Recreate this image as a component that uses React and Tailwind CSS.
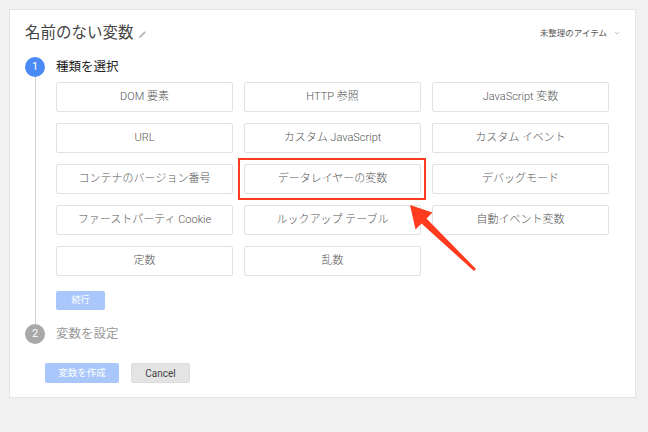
import { ChevronDown } from "lucide-react";

const types = [
  "DOM 要素",
  "HTTP 参照",
  "JavaScript 変数",
  "URL",
  "カスタム JavaScript",
  "カスタム イベント",
  "コンテナのバージョン番号",
  "データレイヤーの変数",
  "デバッグモード",
  "ファーストパーティ Cookie",
  "ルックアップ テーブル",
  "自動イベント変数",
  "定数",
  "乱数",
];

const PencilIcon = () => (
  <svg width="9" height="9" viewBox="0 0 9 9" className="mt-[3px]">
    <path d="M1 8 L1.6 6.2 L6.6 1.2 L7.8 2.4 L2.8 7.4 Z" fill="#b5b5b5" />
  </svg>
);

export default function App() {
  return (
    <div
      className="relative min-h-[432px] w-full bg-[#f1f1f1] pt-[9px] pl-[9px]"
      style={{ fontFamily: '"Roboto", "Noto Sans CJK JP", sans-serif' }}
    >
      <div className="w-[627px] h-[389px] bg-white border border-[#e4e4e4]">
        {/* header */}
        <div className="flex items-start justify-between pl-[15px] pr-[14px] pt-[11px]">
          <div className="flex items-center gap-[4px]">
            <h1 className="text-[15.5px] leading-[24px] text-[#444]">名前のない変数</h1>
            <PencilIcon />
          </div>
          <button className="mt-[5px] flex items-center gap-[6px] text-[8.5px] leading-[14px] text-[#555]">
            未整理のアイテム
            <ChevronDown size={8} strokeWidth={1.5} className="text-[#888]" />
          </button>
        </div>

        {/* step 1 */}
        <div className="mt-[12px] flex pl-[15px]">
          <div className="flex w-[20px] flex-col items-center">
            <div className="flex h-[20px] w-[20px] items-center justify-center rounded-full bg-[#4a8af4] text-[11px] text-white">
              1
            </div>
            <div className="w-px flex-1 bg-[#d0d0d0]" />
          </div>
          <div className="ml-[11px] pb-[14px]">
            <div className="h-[20px] text-[12.5px] leading-[20px] text-[#222]">種類を選択</div>
            <div className="mt-[5px] grid grid-cols-[repeat(3,177px)] gap-[11px]">
              {types.map((t) => (
                <div key={t} className="relative">
                  <button className="flex h-[30px] w-full items-center justify-center rounded-[2px] border border-[#e2e2e2] bg-white text-[11px] font-light text-[#555]">
                    {t}
                  </button>
                  {t === "データレイヤーの変数" && (
                    <div className="pointer-events-none absolute -top-[6px] -bottom-[6px] -left-[6px] -right-[5px] border-2 border-[#ff3b22]" />
                  )}
                </div>
              ))}
            </div>
            <button className="mt-[15px] h-[19px] w-[49px] rounded-[2px] bg-[#a9c7fa] text-[9px] text-white">
              続行
            </button>
          </div>
        </div>

        {/* step 2 */}
        <div className="flex items-center pl-[15px]">
          <div className="flex h-[20px] w-[20px] items-center justify-center rounded-full bg-[#a8a8a8] text-[11px] text-white">
            2
          </div>
          <div className="ml-[11px] text-[12.5px] leading-[20px] text-[#999]">変数を設定</div>
        </div>

        {/* footer buttons */}
        <div className="mt-[19px] flex gap-[12px] pl-[35px]">
          <button className="h-[20px] w-[74px] rounded-[2px] bg-[#a9c7fa] text-[9.5px] text-white">
            変数を作成
          </button>
          <button className="h-[20px] w-[59px] rounded-[2px] border border-[#dcdcdc] bg-[#e4e4e4] text-[10px] text-[#444]">
            Cancel
          </button>
        </div>
      </div>

      {/* annotation arrow */}
      <svg className="pointer-events-none absolute left-0 top-0" width="648" height="432">
        <polygon
          points="410,205 432.5,212.5 426.5,218.5 476,269 474,271 421.5,223.5 415.5,229.5"
          fill="#ff3b1f"
        />
      </svg>
    </div>
  );
}
